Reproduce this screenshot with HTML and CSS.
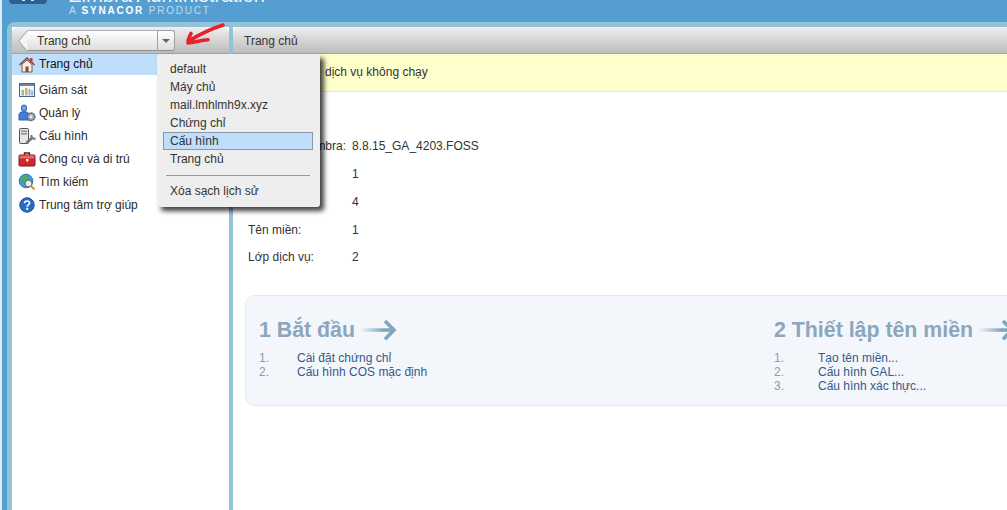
FILE: index.html
```html
<!DOCTYPE html>
<html lang="vi">
<head>
    <meta charset="UTF-8">
    <meta name="viewport" content="width=device-width, initial-scale=1.0">
    <title>Zimbra Administration</title>
    <link rel="stylesheet" href="styles.css">
</head>
<body>

<header class="topbar">
    <div class="logo-pill"><span></span><span></span></div>
    <div class="brand">
        <div class="brand-title">Zimbra Administration</div>
        <div class="brand-sub">A <b>SYNACOR</b> PRODUCT</div>
    </div>
</header>

<div class="shell">
    <aside class="sidebar">
        <div class="tabbar">
            <div class="crumb">
                <svg class="crumb-back" width="10" height="22" viewBox="0 0 10 22"><path d="M9.500 .5 L.8 11 L9.500 21.500" fill="#f4f4f4" stroke="#a0a0a0"/></svg>
                <span class="crumb-label">Trang chủ</span>
                <span class="crumb-drop"><i></i></span>
            </div>
        </div>
        <ul class="nav">
            <li class="nav-item is-active">
                <svg width="18" height="18" viewBox="0 0 18 18"><path d="M1.500 9 9 2l7.500 7" fill="none" stroke="#7a4a3a" stroke-width="1.600"/><path d="M4 8.500 9 4l5 4.500V16H4z" fill="#f4efe6" stroke="#7d5a4c"/><rect x="12" y="2" width="2.500" height="5" fill="#b5473a"/><rect x="7.500" y="10.500" width="3" height="5.500" fill="#8a4a36"/></svg>
                <span>Trang chủ</span>
            </li>
            <li class="nav-item">
                <svg width="18" height="18" viewBox="0 0 18 18"><rect x="1.500" y="2.500" width="15" height="13" fill="#f6f8fb" stroke="#4d6484"/><rect x="2" y="3" width="14" height="2" fill="#6d84a6"/><rect x="3.500" y="9" width="2.500" height="5.500" fill="#8fbf8a"/><rect x="7" y="7" width="2.500" height="7.500" fill="#e0a868"/><rect x="10.500" y="8" width="2" height="6.500" fill="#8fb4dc"/><rect x="13.200" y="9.500" width="2" height="5" fill="#8fb4dc"/></svg>
                <span>Giám sát</span>
            </li>
            <li class="nav-item">
                <svg width="18" height="18" viewBox="0 0 18 18"><rect x="3.500" y="1" width="5" height="6.500" rx="2.500" fill="#6ba3ea" stroke="#2d62b0"/><path d="M1 16v-5c0-2 1.500-3 3-3h4c1 0 2 .5 2.500 1.500V16z" fill="#3f7fd8" stroke="#2d62b0"/><circle cx="13" cy="12.800" r="3.800" fill="#a6aeb6" stroke="#555e68" stroke-dasharray="1.600 .6" stroke-width="1.500"/><circle cx="13" cy="12.800" r="1.300" fill="#f2f4f6"/></svg>
                <span>Quản lý</span>
            </li>
            <li class="nav-item">
                <svg width="18" height="18" viewBox="0 0 18 18"><rect x="1.500" y="1.500" width="9" height="15" rx="1" fill="#e6e6e2" stroke="#4f5256"/><rect x="3" y="3.500" width="6" height="1.500" fill="#8a8e92"/><rect x="3" y="6" width="6" height="1.500" fill="#8a8e92"/><path d="M8.500 16 14.500 10.500" stroke="#6d747a" stroke-width="2.600"/><path d="M13.500 8a3 3 0 0 0 4 3.500" fill="none" stroke="#6d747a" stroke-width="2"/></svg>
                <span>Cấu hình</span>
            </li>
            <li class="nav-item">
                <svg width="18" height="18" viewBox="0 0 18 18"><path d="M6.500 5V3h5v2" fill="none" stroke="#5a1c1c" stroke-width="1.400"/><rect x="1" y="5" width="16" height="11" rx="1" fill="#d0262e" stroke="#7a1a1e"/><rect x="1.500" y="5.500" width="15" height="3" fill="#ea6a68"/><rect x="8" y="9" width="2.500" height="2.500" fill="#f4e8d0"/></svg>
                <span>Công cụ và di trú</span>
            </li>
            <li class="nav-item">
                <svg width="18" height="18" viewBox="0 0 18 18"><circle cx="8" cy="8" r="6.800" fill="#3e9bd6" stroke="#2a79b4"/><path d="M3 6c2-3 5-4 7-3 0 2-2 2-2 4s-2 4-3 3-2-2-2-4z" fill="#4fb04a"/><circle cx="10.500" cy="10.500" r="3.400" fill="#e2f2fa" stroke="#6f7478" stroke-width="1.200"/><path d="m13 13 3.500 3.500" stroke="#c89a2c" stroke-width="2"/></svg>
                <span>Tìm kiếm</span>
            </li>
            <li class="nav-item">
                <svg width="18" height="18" viewBox="0 0 18 18"><circle cx="9" cy="9" r="7.200" fill="#2a6cc4" stroke="#174a94"/><path d="M6.600 7.200C6.600 5.800 7.700 5 9 5s2.500.8 2.500 2.100c0 1.800-2.300 1.800-2.300 3.600" fill="none" stroke="#fff" stroke-width="1.700"/><rect x="8.200" y="11.800" width="2" height="2" fill="#fff"/></svg>
                <span>Trung tâm trợ giúp</span>
            </li>
        </ul>
    </aside>

    <main class="content">
        <div class="tabbar tabbar-main">Trang chủ</div>
        <div class="notice">dịch vụ không chạy</div>

        <table class="summary">
            <tr><td>Phiên bản Zimbra:</td><td>8.8.15_GA_4203.FOSS</td></tr>
            <tr><td>Máy chủ:</td><td>1</td></tr>
            <tr><td>Tài khoản:</td><td>4</td></tr>
            <tr><td>Tên miền:</td><td>1</td></tr>
            <tr><td>Lớp dịch vụ:</td><td>2</td></tr>
        </table>

        <section class="steps">
            <div class="step step-first">
                <h2>1 Bắt đầu
                    <svg class="step-arrow" width="38" height="22" viewBox="0 0 38 22"><defs><linearGradient id="fadeA"><stop offset="0" stop-color="#7fa6bd" stop-opacity="0"/><stop offset=".7" stop-color="#7fa6bd"/></linearGradient></defs><rect x="0" y="9.300" width="33" height="3.500" fill="url(#fadeA)"/><path d="m25 2 9 9.100-9 9.100" fill="none" stroke="#7fa6bd" stroke-width="3.600"/></svg>
                </h2>
                <ol>
                    <li><span class="num">1.</span>Cài đặt chứng chỉ</li>
                    <li><span class="num">2.</span>Cấu hình COS mặc định</li>
                </ol>
            </div>
            <div class="step step-second">
                <h2>2 Thiết lập tên miền
                    <svg class="step-arrow" width="38" height="22" viewBox="0 0 38 22"><defs><linearGradient id="fadeB"><stop offset="0" stop-color="#7fa6bd" stop-opacity="0"/><stop offset=".7" stop-color="#7fa6bd"/></linearGradient></defs><rect x="0" y="9.300" width="33" height="3.500" fill="url(#fadeB)"/><path d="m25 2 9 9.100-9 9.100" fill="none" stroke="#7fa6bd" stroke-width="3.600"/></svg>
                </h2>
                <ol>
                    <li><span class="num">1.</span>Tạo tên miền...</li>
                    <li><span class="num">2.</span>Cấu hình GAL...</li>
                    <li><span class="num">3.</span>Cấu hình xác thực...</li>
                </ol>
            </div>
        </section>
    </main>
</div>

<!-- history menu, open over the sidebar -->
<div class="history-menu">
    <div class="menu-item">default</div>
    <div class="menu-item">Máy chủ</div>
    <div class="menu-item">mail.lmhlmh9x.xyz</div>
    <div class="menu-item">Chứng chỉ</div>
    <div class="menu-item is-selected">Cấu hình</div>
    <div class="menu-item">Trang chủ</div>
    <hr class="menu-sep">
    <div class="menu-item">Xóa sạch lịch sử</div>
</div>

<!-- red annotation on the screenshot -->
<svg class="annotation" width="44" height="30" viewBox="0 0 44 30"><path d="M39 3C28 6.500 16 12 4 19.500c0-2 1.500-5 3-8M4 21c7-1 14-2.500 20-3.200" fill="none" stroke="#e8212b" stroke-width="3.600" stroke-linecap="round" stroke-linejoin="round"/></svg>

</body>
</html>
```

FILE: styles.css
```css
body {
    margin: 0;
    height: 510px;
    overflow: hidden;
    display: flex;
    flex-direction: column;
    background-color: #559ed1;
    border-left: 2px solid #dfeaf3;
    box-sizing: border-box;
    font-family: "Liberation Sans", Arial, sans-serif;
    font-size: 12px;
    color: #333;
}

.topbar {
    height: 22px;
    flex: none;
    display: flex;
    overflow: hidden;
    padding-left: 7px;
}

.logo-pill {
    width: 38px;
    height: 4px;
    display: flex;
    justify-content: center;
    gap: 6px;
    background-color: #2c5f92;
    border-radius: 0 0 8px 8px;
}

.logo-pill span {
    width: 3px;
    height: 1px;
    background-color: #dbe8f3;
}

.brand {
    margin-left: 22px;
    margin-top: -16px;
    color: #eef5fb;
}

.brand-title {
    font-size: 20.300px;
    line-height: 22px;
    white-space: nowrap;
}

.brand-sub {
    margin-top: -1px;
    font-size: 10px;
    line-height: 11px;
    letter-spacing: 1.800px;
    color: #c4dcee;
    white-space: nowrap;
}

.brand-sub b {
    color: #fff;
}

.shell {
    flex: 1;
    display: flex;
    gap: 4px;
    margin-left: 5px;
    padding: 5px 0 0 5px;
    background-color: #93c2d9;
    border-radius: 8px 0 0 0;
    min-height: 0;
}

.sidebar {
    width: 217px;
    flex: none;
    background-color: #fff;
    display: flex;
    flex-direction: column;
}

.content {
    flex: 1;
    min-width: 0;
    background-color: #fff;
    overflow: hidden;
    display: flex;
    flex-direction: column;
}

.tabbar {
    height: 27px;
    flex: none;
    box-sizing: border-box;
    background: linear-gradient(#efefef, #bcbcbc);
    border-bottom: 1px solid #a5a5a5;
    border-radius: 6px 6px 0 0;
    padding: 3px 0 0 6px;
}

.tabbar-main {
    padding: 1px 0 0 11px;
    line-height: 27px;
    border-radius: 6px 0 0 0;
}

.crumb {
    display: flex;
    width: 157px;
    height: 21px;
    align-items: stretch;
}

.crumb-back {
    flex: none;
    margin-right: -1px;
    position: relative;
    z-index: 1;
}

.crumb-label {
    flex: 1;
    padding-left: 10px;
    line-height: 20px;
    background: linear-gradient(#fff, #dedede);
    border-top: 1px solid #b0b0b0;
    border-bottom: 1px solid #909090;
    box-sizing: border-box;
}

.crumb-drop {
    width: 18px;
    flex: none;
    box-sizing: border-box;
    background: linear-gradient(#fff, #dedede);
    border: 1px solid #a0a0a0;
    border-bottom-color: #909090;
    border-radius: 0 3px 3px 0;
    display: flex;
    align-items: center;
    justify-content: center;
}

.crumb-drop i {
    width: 0;
    height: 0;
    border: 4px solid transparent;
    border-top: 4px solid #666;
    border-bottom: 0;
}

.nav {
    list-style: none;
    margin: 0;
    padding: 0;
}

.nav-item {
    height: 23px;
    display: flex;
    align-items: center;
    gap: 3px;
    padding-left: 6px;
    color: #2b2b2b;
}

.nav-item.is-active {
    height: 21px;
    margin-bottom: 3px;
    background-color: #bfdefc;
    color: #111;
}

.nav-item.is-active span {
    margin-top: -2px;
}

.notice {
    height: 38px;
    flex: none;
    box-sizing: border-box;
    padding-left: 92px;
    line-height: 36px;
    background-color: #ffffcc;
    border-bottom: 1px solid #f2e8a0;
}

.summary {
    border-collapse: collapse;
    margin: 40px 0 0 15px;
    line-height: 14px;
}

.summary td {
    padding: 0;
    height: 28px;
}

.summary tr:last-child td {
    height: 26px;
}

.summary td:first-child {
    width: 104px;
}

.steps {
    margin: 25px -10px 0 12px;
    height: 111px;
    flex: none;
    box-sizing: border-box;
    display: flex;
    background-color: #f3f6fb;
    border: 1px solid #e6e9f0;
    border-radius: 10px 0 0 10px;
    padding: 21px 0 0 13px;
}

.step-first {
    width: 515px;
    flex: none;
}

.step-second {
    white-space: nowrap;
}

.step h2 {
    margin: 0 0 8px;
    font-size: 21.330px;
    line-height: 26px;
    font-weight: bold;
    color: #8ba6bd;
    display: flex;
    align-items: center;
    gap: 5px;
}

.step ol {
    list-style: none;
    margin: 0;
    padding: 0;
    line-height: 14px;
    color: #35598a;
}

.num {
    display: inline-block;
    width: 38px;
    color: #8a9cab;
}

.step-second .num {
    width: 44px;
}

.history-menu {
    position: absolute;
    left: 157px;
    top: 54px;
    width: 163px;
    height: 153px;
    box-sizing: border-box;
    padding: 6px 7px 0 6px;
    background-color: #eee;
    border-radius: 3px;
    box-shadow: 4px 4px 5px rgba(0, 0, 0, 0.75);
}

.menu-item {
    height: 18px;
    box-sizing: border-box;
    padding-left: 6px;
    border: 1px solid transparent;
    line-height: 16px;
}

.menu-item.is-selected {
    background-color: #bfdefc;
    border-color: #8a99a8;
}

.menu-sep {
    height: 1px;
    margin: 7px 3px 6px 3px;
    border: 0;
    background-color: #9a9a9a;
}

.annotation {
    position: absolute;
    left: 184px;
    top: 22px;
}
```
